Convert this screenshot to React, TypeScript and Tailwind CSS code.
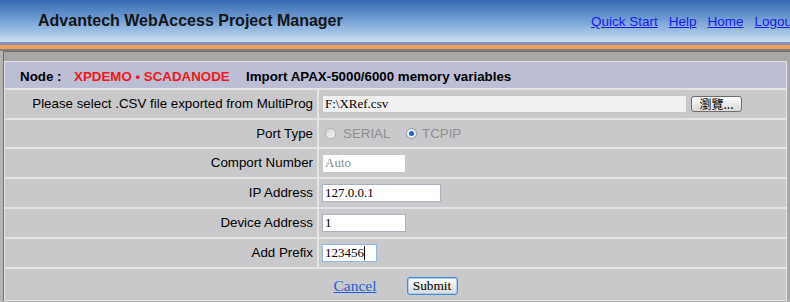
export default function App() {
  const links = ['Quick Start', 'Help', 'Home', 'Logout'];
  const cell = 'bg-[#c9c9cb] flex items-center';
  const label = `${cell} justify-end pr-[4px]`;
  const field = `${cell} pl-[3px]`;
  const input = "h-[18px] border px-[2px] font-['Liberation_Serif',serif] text-[13px] outline-none";

  return (
    <div className="w-[790px] h-[302px] overflow-hidden bg-[#b4b4b4] font-['Liberation_Sans',Arial,sans-serif] text-[13.33px] text-black">
      <div className="h-[42px] flex bg-gradient-to-b from-[#346ab3] via-[#77a2d5] to-[#c8def1] whitespace-nowrap overflow-hidden">
        <div className="w-[591px] shrink-0 pl-[38px] pt-[11px] text-[16px] leading-[20px] font-bold text-[#141414]">
          Advantech WebAccess Project Manager
        </div>
        <div className="flex gap-[11px] pt-[12px] text-[13.5px] leading-[20px]">
          {links.map((l) => (
            <a key={l} href="#" className="text-[#1a1ae8] underline">
              {l}
            </a>
          ))}
        </div>
      </div>
      <div className="h-[3px] bg-[#8991b2]" />
      <div className="h-[4px] bg-[#f3a05e]" />
      <div className="h-[2px] bg-[#7f7f7f]" />

      <div className="pl-[3px]">
        <div className="border-l border-t border-[#6f6f6f] bg-[#a7a7a7] pt-[9px] pr-[3px]">
          <div className="grid grid-cols-[312px_1fr] gap-[2px] bg-[#e4e4e4] p-[1px]">
            <div className="col-span-2 h-[26px] bg-[#bcbed5] flex items-center pl-[15px] pt-[4px] font-bold whitespace-nowrap">
              <span className="w-[54px]">Node :</span>
              <span className="text-[#f01818] w-[172px]">XPDEMO • SCADANODE</span>
              <span>Import APAX-5000/6000 memory variables</span>
            </div>

            <div className={`${label} h-[28px]`}>Please select .CSV file exported from MultiProg</div>
            <div className={field}>
              <input
                readOnly
                value="F:\XRef.csv"
                className={`${input} w-[365px] h-[17px] bg-[#f0f0f0] border-[#c4c4c4] text-black`}
              />
              <button className="ml-[4px] w-[51px] h-[16px] rounded-[3px] border border-[#6c6c6c] bg-gradient-to-b from-[#fbfbfb] to-[#d9d9d9] text-[12px] leading-none font-['Noto_Sans_CJK_TC',sans-serif]">
                瀏覽...
              </button>
            </div>

            <div className={`${label} h-[27px]`}>Port Type</div>
            <div className={`${field} text-[#8e8e8e]`}>
              <span className="ml-[3px] w-[11px] h-[11px] rounded-full border border-[#b0b0b0] bg-gradient-to-br from-[#d6d6d6] to-[#f6f6f6]" />
              <span className="ml-[7px] w-[63px]">SERIAL</span>
              <span className="w-[11px] h-[11px] rounded-full border border-[#8d98aa] bg-[#eef0f4] flex items-center justify-center">
                <span className="w-[5px] h-[5px] rounded-full bg-[#1f63c4]" />
              </span>
              <span className="ml-[5px]">TCPIP</span>
            </div>

            <div className={`${label} h-[28px]`}>Comport Number</div>
            <div className={field}>
              <input
                readOnly
                value="Auto"
                className={`${input} w-[84px] h-[19px] bg-white border-[#c8c8c8] text-[#8a8a8a]`}
              />
            </div>

            <div className={`${label} h-[28px]`}>IP Address</div>
            <div className={field}>
              <input readOnly value="127.0.0.1" className={`${input} w-[119px] bg-white border-[#a9b1bd] text-black`} />
            </div>

            <div className={`${label} h-[28px]`}>Device Address</div>
            <div className={field}>
              <input readOnly value="1" className={`${input} w-[84px] bg-white border-[#a9b1bd] text-black`} />
            </div>

            <div className={`${label} h-[28px]`}>Add Prefix</div>
            <div className={field}>
              <div className={`${input} w-[55px] flex items-center bg-white border-[#8fb8e4] text-black`}>
                123456
                <span className="w-[1px] h-[14px] bg-black" />
              </div>
            </div>

            <div className="col-span-2 h-[31px] bg-[#c9c9cb] flex items-center justify-center gap-[30px] pt-[2px]">
              <a href="#" className="text-[#1f5fd3] underline font-['Liberation_Serif',serif] text-[15.5px]">
                Cancel
              </a>
              <button className="w-[51px] h-[18px] rounded-[3px] border border-[#3f8ad6] bg-gradient-to-b from-[#fdfdfd] to-[#dadada] shadow-[inset_0_0_0_1px_#a8cdf0] font-['Liberation_Serif',serif] text-[13.33px] leading-none">
                Submit
              </button>
            </div>
          </div>
        </div>
      </div>
    </div>
  );
}
